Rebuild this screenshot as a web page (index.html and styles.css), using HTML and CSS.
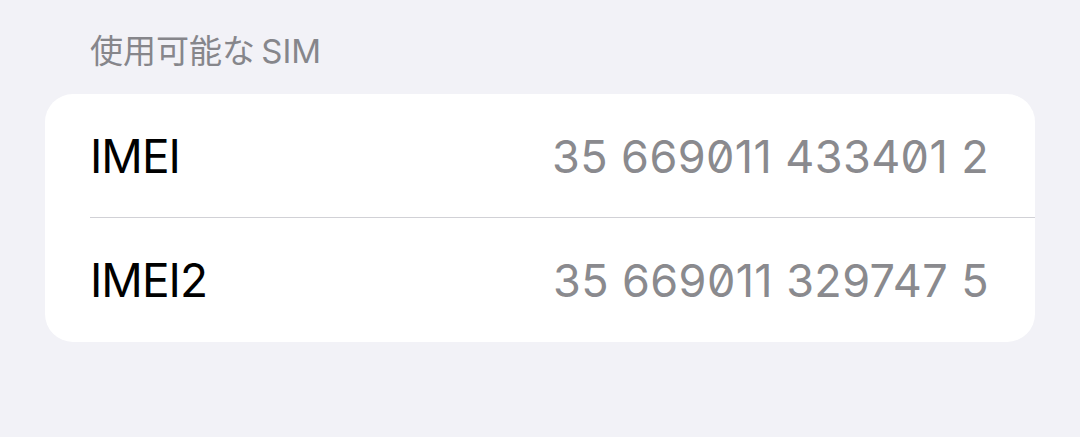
FILE: index.html
```html
<!DOCTYPE html>
<html lang="ja">
<head>
  <meta charset="UTF-8">
  <title>情報</title>
  <link rel="stylesheet" href="styles.css">
</head>
<body>

  <section class="group">
    <h2 class="group-title">使用可能な SIM</h2>

    <div class="card">
      <div class="row">
        <span class="label">IMEI</span>
        <span class="value">35 669011 433401 2</span>
      </div>
      <div class="row">
        <span class="label">IMEI2</span>
        <span class="value">35 669011 329747 5</span>
      </div>
    </div>
  </section>

</body>
</html>
```

FILE: styles.css
```css
body { margin: 0; background: #f2f2f7; font-family: Inter, "Noto Sans CJK JP", sans-serif; }
.group { padding: 30px 45px 0; }
.group-title { margin: 0 0 22px 45px; font-size: 33px; font-weight: 400; line-height: 42px; word-spacing: -3px; color: #86868b; }
.card { background: #fff; border-radius: 28px; overflow: hidden; }
.row { display: flex; justify-content: space-between; align-items: center; height: 124px; padding: 0 46px 0 45px; position: relative; }
.row + .row::before { content: ""; position: absolute; top: -1px; left: 45px; right: 0; border-top: 1px solid #d1d1d6; }
.label { font-size: 46px; letter-spacing: -1px; color: #000; }
.value { font-size: 45px; letter-spacing: 0.4px; color: #8a8a8e; font-variant-numeric: slashed-zero; }
```
